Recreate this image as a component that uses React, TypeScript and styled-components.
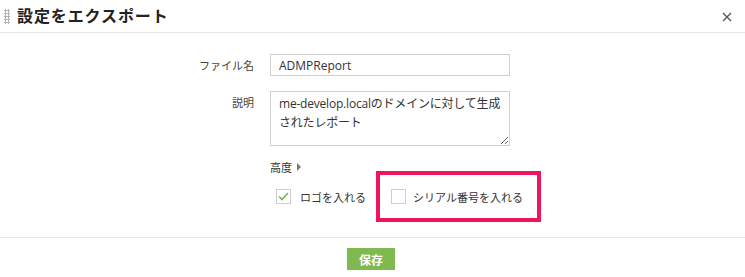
import styled, { createGlobalStyle } from "styled-components";

const GlobalStyle = createGlobalStyle`
  html, body {
    margin: 0;
    padding: 0;
    background: #fff;
  }
  body {
    font-family: "Open Sans", "Noto Sans CJK JP", sans-serif;
    color: #333;
  }
`;

const Dialog = styled.div`
  width: 745px;
  height: 277px;
  display: flex;
  flex-direction: column;
  background: #fff;
  overflow: hidden;
`;

const Header = styled.div`
  height: 33px;
  display: flex;
  align-items: center;
  border-bottom: 1px solid #e6e6e6;
  padding: 0 12px 0 4px;
  box-sizing: border-box;
`;

const Grip = styled.div`
  width: 6px;
  height: 15px;
  margin-right: 7px;
  background-image: radial-gradient(circle, #b5b5b5 1px, transparent 1.2px);
  background-size: 3px 3px;
`;

const Title = styled.h1`
  margin: 0;
  flex: 1;
  font-family: "Noto Sans CJK JP", sans-serif;
  font-size: 16px;
  letter-spacing: 0.9px;
  font-weight: 700;
  color: #222;
  line-height: 1;
  margin-top: -3px;
`;

const CloseButton = styled.button`
  border: none;
  background: none;
  padding: 0;
  width: 12px;
  height: 12px;
  display: flex;
  margin-top: 1px;
  cursor: pointer;
`;

const Body = styled.div`
  flex: 1;
  padding-top: 21px;
  box-sizing: border-box;
`;

const Form = styled.div`
  display: grid;
  grid-template-columns: 254px 240px;
  column-gap: 16px;
  row-gap: 15px;
  align-items: start;
`;

const Label = styled.label`
  font-family: "Noto Sans CJK JP", sans-serif;
  font-size: 11px;
  color: #444;
  text-align: right;
  line-height: 22px;
`;

const TextInput = styled.input`
  box-sizing: border-box;
  width: 240px;
  height: 22px;
  border: 1px solid #cfcfcf;
  padding: 0 8px;
  font-family: "Open Sans", "Noto Sans CJK JP", sans-serif;
  font-size: 12px;
  color: #333;
  outline: none;
`;

const TextArea = styled.textarea`
  box-sizing: border-box;
  width: 240px;
  height: 55px;
  border: 1px solid #cfcfcf;
  padding: 2px 5px 2px 8px;
  font-family: "Open Sans", "Noto Sans CJK JP", sans-serif;
  font-size: 12px;
  letter-spacing: -0.2px;
  line-height: 19px;
  color: #333;
  resize: vertical;
  outline: none;
  display: block;
`;

const Advanced = styled.div`
  grid-column: 2;
  margin-top: -2px;
  display: flex;
  align-items: center;
  gap: 5px;
  font-family: "Noto Sans CJK JP", sans-serif;
  font-size: 11px;
  color: #333;
  height: 16px;
`;

const Caret = styled.span`
  width: 0;
  height: 0;
  border-top: 4px solid transparent;
  border-bottom: 4px solid transparent;
  border-left: 4px solid #777;
`;

const CheckRow = styled.div`
  grid-column: 2;
  display: flex;
  align-items: center;
  margin-top: -19px;
  margin-left: 6px;
  width: 280px;
`;

const CheckItem = styled.div<{ $highlight?: boolean }>`
  display: flex;
  align-items: center;
  gap: 9px;
  font-family: "Noto Sans CJK JP", sans-serif;
  font-size: 11px;
  color: #333;
  white-space: nowrap;
  box-sizing: border-box;
  ${(p) =>
    p.$highlight
      ? `
    margin-left: 10px;
    border: 4px solid #f0145a;
    height: 51px;
    padding: 0 14px 0 11px;
    gap: 7px;
  `
      : ``}
`;

const Box = styled.span`
  width: 15px;
  height: 15px;
  box-sizing: border-box;
  border: 1px solid #cfcfcf;
  display: flex;
  align-items: center;
  justify-content: center;
  background: #fff;
`;

const Footer = styled.div`
  height: 40px;
  border-top: 1px solid #e6e6e6;
  display: flex;
  justify-content: center;
  align-items: flex-start;
  padding-top: 10px;
  box-sizing: border-box;
`;

const SaveButton = styled.button`
  width: 48px;
  height: 22px;
  border: none;
  background: #80b94f;
  color: #fff;
  font-family: "Noto Sans CJK JP", sans-serif;
  font-size: 12px;
  font-weight: 700;
  padding: 0;
  margin-left: -3px;
  cursor: pointer;
`;

const Check = ({ checked }: { checked?: boolean }) => (
  <Box>
    {checked && (
      <svg width="11" height="9" viewBox="0 0 11 9">
        <path d="M1 4.5 L4 7.5 L10 1" fill="none" stroke="#79b548" strokeWidth="1.6" />
      </svg>
    )}
  </Box>
);

export default function App() {
  return (
    <>
      <GlobalStyle />
      <Dialog>
        <Header>
          <Grip />
          <Title>設定をエクスポート</Title>
          <CloseButton aria-label="close">
            <svg width="12" height="12" viewBox="0 0 12 12">
              <path d="M2 2 L10 10 M10 2 L2 10" stroke="#555" strokeWidth="1.3" />
            </svg>
          </CloseButton>
        </Header>
        <Body>
          <Form>
            <Label>ファイル名</Label>
            <TextInput defaultValue="ADMPReport" />
            <Label>説明</Label>
            <TextArea defaultValue="me-develop.localのドメインに対して生成されたレポート" />
            <Advanced>
              高度 <Caret />
            </Advanced>
            <CheckRow>
              <CheckItem>
                <Check checked />
                ロゴを入れる
              </CheckItem>
              <CheckItem $highlight>
                <Check />
                シリアル番号を入れる
              </CheckItem>
            </CheckRow>
          </Form>
        </Body>
        <Footer>
          <SaveButton>保存</SaveButton>
        </Footer>
      </Dialog>
    </>
  );
}
